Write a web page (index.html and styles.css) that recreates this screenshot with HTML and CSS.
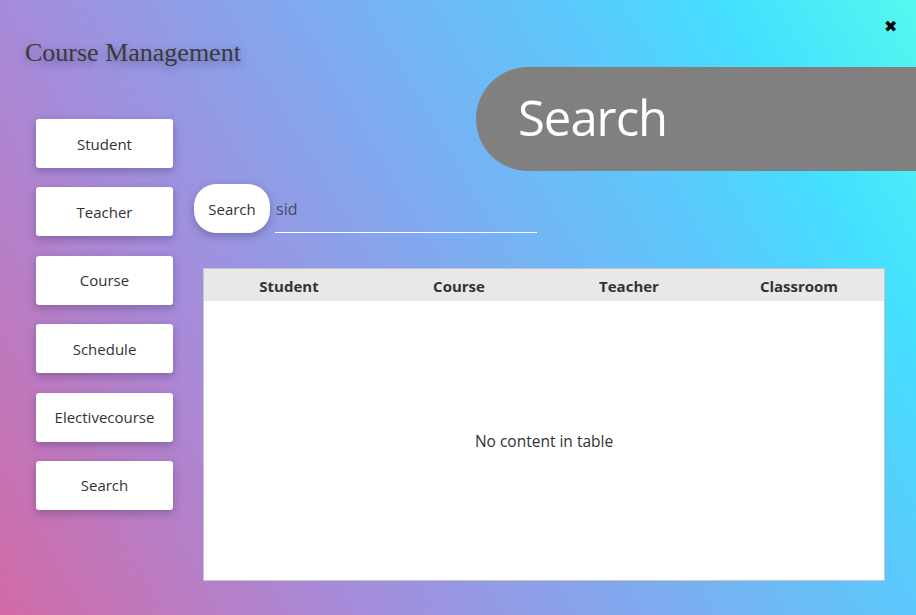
FILE: index.html
```html
<!DOCTYPE html>
<html lang="en">
<head>
<meta charset="utf-8">
<title>Course Management</title>
<link rel="stylesheet" href="styles.css">
</head>
<body>
<div class="app">
  <aside class="sidebar">
    <h1 class="title">Course Management</h1>
    <nav class="nav">
      <button class="nav-btn">Student</button>
      <button class="nav-btn">Teacher</button>
      <button class="nav-btn">Course</button>
      <button class="nav-btn">Schedule</button>
      <button class="nav-btn">Electivecourse</button>
      <button class="nav-btn">Search</button>
    </nav>
  </aside>
  <main class="main">
    <div class="banner">Search</div>
    <div class="search-row">
      <button class="search-btn">Search</button>
      <div class="field">sid</div>
    </div>
    <div class="table">
      <div class="thead">
        <div class="th">Student</div>
        <div class="th">Course</div>
        <div class="th">Teacher</div>
        <div class="th">Classroom</div>
      </div>
      <div class="tbody">No content in table</div>
    </div>
  </main>
  <span class="close">&#10006;</span>
</div>
</body>
</html>
```

FILE: styles.css
```css
* { box-sizing: border-box; }
html, body { margin: 0; padding: 0; }
body {
  width: 916px;
  height: 615px;
  overflow: hidden;
  font-family: "Open Sans", "Noto Sans", sans-serif;
  color: #333;
}
.app {
  position: relative;
  display: flex;
  width: 916px;
  height: 615px;
  background: linear-gradient(60deg, #d26aa6 0%, #a68bda 28%, #82a8ef 50%, #5cc8fb 72%, #44e0ff 85%, #55f8ee 100%);
}
.sidebar {
  width: 194px;
  flex: none;
  padding: 37px 0 0 25px;
}
.title {
  margin: 0;
  font-family: "Liberation Serif", "Times New Roman", serif;
  font-weight: normal;
  font-size: 26px;
  line-height: 32px;
  color: #3a3a3a;
  white-space: nowrap;
  text-shadow: 0 3px 8px rgba(40, 40, 80, 0.45);
}
.nav {
  display: flex;
  flex-direction: column;
  gap: 19.4px;
  margin: 50px 0 0 11px;
}
.nav-btn {
  width: 137px;
  height: 49px;
  border: none;
  border-radius: 3px;
  background: #fff;
  font-family: "Open Sans", "Noto Sans", sans-serif;
  font-size: 15px;
  color: #333;
  box-shadow: 0 3px 8px rgba(50, 40, 90, 0.35);
  padding: 0;
}
.main {
  flex: 1;
  display: flex;
  flex-direction: column;
  padding-top: 67px;
}
.banner {
  align-self: flex-end;
  width: 440px;
  height: 104px;
  background: #808080;
  border-radius: 52px 0 0 52px;
  color: #fff;
  font-size: 49px;
  letter-spacing: -1px;
  line-height: 100px;
  padding-left: 42px;
}
.search-row {
  display: flex;
  align-items: center;
  margin-top: 13px;
  height: 49px;
}
.search-btn {
  width: 76px;
  height: 49px;
  border: none;
  border-radius: 22px;
  background: #fff;
  font-family: "Open Sans", "Noto Sans", sans-serif;
  font-size: 15px;
  color: #333;
  box-shadow: 0 3px 8px rgba(50, 40, 90, 0.35);
  padding: 0;
}
.field {
  margin-left: 5px;
  width: 262px;
  height: 49px;
  border-bottom: 1px solid #fff;
  font-size: 16px;
  color: #4a4a58;
  line-height: 50px;
  padding-left: 1px;
}
.table {
  margin: 35px 0 0 9px;
  width: 682px;
  height: 313px;
  border: 1px solid #c6c6c6;
  background: #fff;
  display: flex;
  flex-direction: column;
}
.thead {
  display: grid;
  grid-template-columns: repeat(4, 1fr);
  height: 32px;
  background: #e8e8e8;
}
.th {
  text-align: center;
  font-weight: bold;
  font-size: 15px;
  line-height: 34px;
  color: #333;
}
.tbody {
  flex: 1;
  display: flex;
  align-items: center;
  justify-content: center;
  font-size: 15.5px;
  color: #333;
  padding-bottom: 0;
}
.close {
  position: absolute;
  top: 16px;
  right: 19px;
  font-size: 16px;
  line-height: 20px;
  color: #000;
}
```
